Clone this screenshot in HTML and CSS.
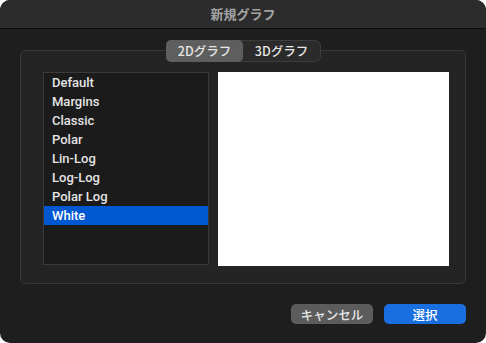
FILE: index.html
```html
<!DOCTYPE html>
<html lang="ja">
<head>
    <meta charset="UTF-8">
    <meta name="viewport" content="width=device-width, initial-scale=1.0">
    <title>新規グラフ</title>
    <link rel="stylesheet" href="styles.css">
</head>
<body>
    <div class="window">
        <div class="titlebar">新規グラフ</div>

        <div class="content">
            <div class="tabs">
                <div class="tab selected">2Dグラフ</div>
                <div class="tab">3Dグラフ</div>
            </div>

            <div class="groupbox">
                <ul class="list">
                    <li>Default</li>
                    <li>Margins</li>
                    <li>Classic</li>
                    <li>Polar</li>
                    <li>Lin-Log</li>
                    <li>Log-Log</li>
                    <li>Polar Log</li>
                    <li class="active">White</li>
                </ul>
                <div class="preview"></div>
            </div>

            <div class="buttons">
                <button class="btn cancel">キャンセル</button>
                <button class="btn primary">選択</button>
            </div>
        </div>
    </div>
</body>
</html>
```

FILE: styles.css
```css
body {
    margin: 0;
    background-color: #ffffff;
    font-family: Roboto, "Noto Sans CJK JP", sans-serif;
    font-size: 13px;
}
.window {
    width: 486px;
    height: 343px;
    background-color: #1e1e1e;
    border-radius: 10px;
    overflow: hidden;
}
.titlebar {
    height: 28px;
    line-height: 28px;
    text-align: center;
    color: #a3a3a3;
    font-weight: bold;
    font-family: "Noto Sans CJK JP", sans-serif;
    font-size: 13px;
    background-color: #2c2c2c;
    border-bottom: 1px solid #0c0c0c;
}
.content {
    padding-top: 11px;
}
.tabs {
    position: relative;
    z-index: 1;
    display: flex;
    width: 155px;
    height: 22px;
    margin-left: 166px;
    background-color: #2b2b2b;
    border: 1px solid #3c3c3c;
    border-radius: 6px;
    box-sizing: border-box;
}
.tab {
    flex: 1;
    text-align: center;
    line-height: 20px;
    color: #e6e6e6;
    font-weight: 500;
    font-family: "Noto Sans CJK JP", sans-serif;
    font-size: 12.5px;
}
.tab.selected {
    background-color: #5e5e5e;
    border-radius: 5px;
    margin: -1px 0 -1px -1px;
    line-height: 22px;
}
.groupbox {
    display: flex;
    gap: 9px;
    width: 446px;
    height: 234px;
    margin: -12px 0 0 20px;
    padding: 21px 0 0 22px;
    box-sizing: border-box;
    background-color: #242424;
    border: 1px solid #383838;
    border-radius: 5px;
}
.list {
    list-style: none;
    margin: 0;
    padding: 0;
    width: 166px;
    height: 193px;
    box-sizing: border-box;
    background-color: #1b1b1b;
    border: 1px solid #3a3a3a;
}
.list li {
    height: 19px;
    line-height: 19px;
    padding-left: 8px;
    color: #e4e4e4;
    font-weight: 500;
}
.list li.active {
    background-color: #0058d0;
    color: #ffffff;
}
.preview {
    width: 231px;
    height: 194px;
    background-color: #ffffff;
}
.buttons {
    display: flex;
    justify-content: flex-end;
    gap: 11px;
    margin: 20px 20px 0 0;
}
.btn {
    width: 82px;
    height: 20px;
    border: none;
    border-radius: 5px;
    color: #e8e8e8;
    font-family: "Noto Sans CJK JP", sans-serif;
    font-size: 12.5px;
    font-weight: 500;
    padding: 0;
}
.cancel {
    background-color: #5c5c5c;
}
.primary {
    background-color: #1a6fe0;
    color: #ffffff;
}
```
